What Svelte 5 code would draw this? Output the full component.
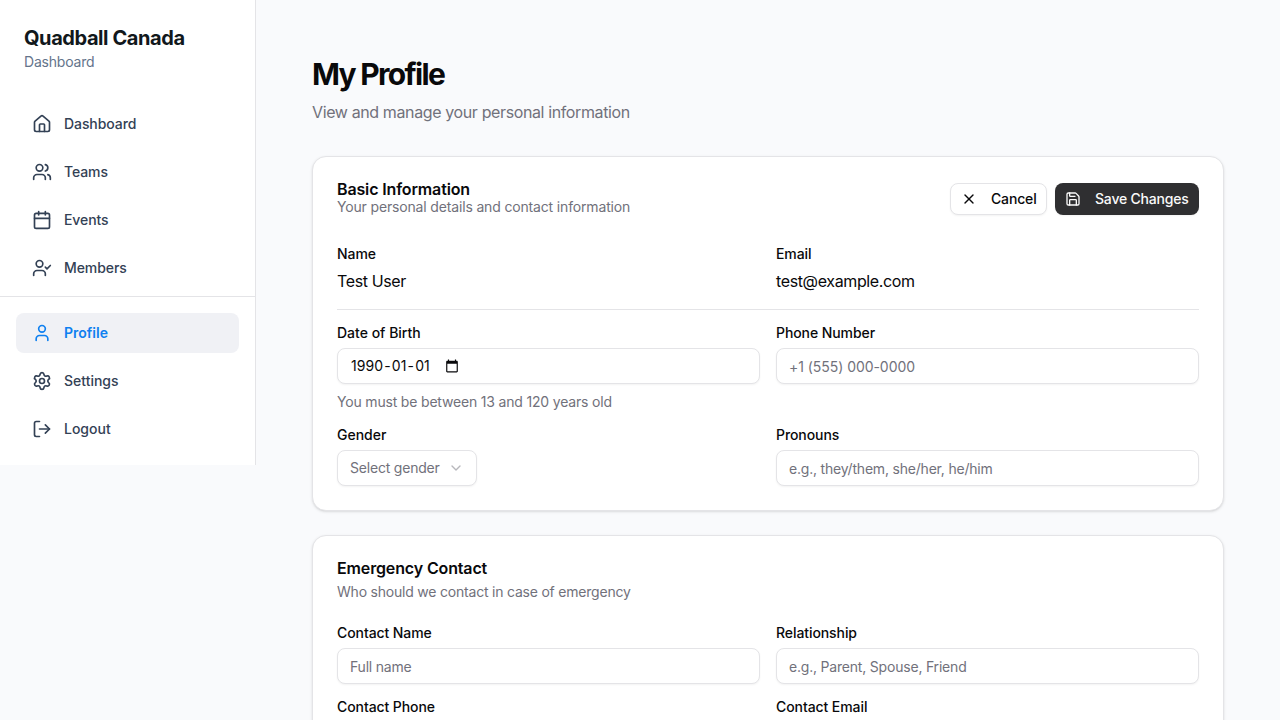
<script>
  const mainNav = [
    { label: 'Dashboard', icon: 'home' },
    { label: 'Teams', icon: 'users' },
    { label: 'Events', icon: 'calendar' },
    { label: 'Members', icon: 'userCheck' }
  ];
  const accountNav = [
    { label: 'Profile', icon: 'user', active: true },
    { label: 'Settings', icon: 'settings' },
    { label: 'Logout', icon: 'logout' }
  ];
  const icons = {
    home: [
      'M15 21v-8a1 1 0 0 0-1-1h-4a1 1 0 0 0-1 1v8',
      'M3 10a2 2 0 0 1 .709-1.528l7-5.999a2 2 0 0 1 2.582 0l7 5.999A2 2 0 0 1 21 10v9a2 2 0 0 1-2 2H5a2 2 0 0 1-2-2z'
    ],
    users: [
      'M16 21v-2a4 4 0 0 0-4-4H6a4 4 0 0 0-4 4v2',
      'M5 7a4 4 0 1 0 8 0a4 4 0 1 0-8 0',
      'M22 21v-2a4 4 0 0 0-3-3.87',
      'M16 3.13a4 4 0 0 1 0 7.75'
    ],
    calendar: [
      'M8 2v4',
      'M16 2v4',
      'M5 4h14a2 2 0 0 1 2 2v14a2 2 0 0 1-2 2H5a2 2 0 0 1-2-2V6a2 2 0 0 1 2-2z',
      'M3 10h18'
    ],
    userCheck: [
      'M16 21v-2a4 4 0 0 0-4-4H6a4 4 0 0 0-4 4v2',
      'M5 7a4 4 0 1 0 8 0a4 4 0 1 0-8 0',
      'm16 11 2 2 4-4'
    ],
    user: ['M19 21v-2a4 4 0 0 0-4-4H9a4 4 0 0 0-4 4v2', 'M8 7a4 4 0 1 0 8 0a4 4 0 1 0-8 0'],
    settings: [
      'M9.671 4.136a2.34 2.34 0 0 1 4.659 0 2.34 2.34 0 0 0 3.319 1.915 2.34 2.34 0 0 1 2.33 4.033 2.34 2.34 0 0 0 0 3.831 2.34 2.34 0 0 1-2.33 4.033 2.34 2.34 0 0 0-3.319 1.915 2.34 2.34 0 0 1-4.659 0 2.34 2.34 0 0 0-3.32-1.915 2.34 2.34 0 0 1-2.33-4.033 2.34 2.34 0 0 0 0-3.831A2.34 2.34 0 0 1 6.35 6.051a2.34 2.34 0 0 0 3.319-1.915',
      'M9 12a3 3 0 1 0 6 0a3 3 0 1 0-6 0'
    ],
    logout: ['m16 17 5-5-5-5', 'M21 12H9', 'M9 21H5a2 2 0 0 1-2-2V5a2 2 0 0 1 2-2h4'],
    close: ['M18 6 6 18', 'm6 6 12 12'],
    save: [
      'M15.2 3a2 2 0 0 1 1.4.6l3.8 3.8a2 2 0 0 1 .6 1.4V19a2 2 0 0 1-2 2H5a2 2 0 0 1-2-2V5a2 2 0 0 1 2-2z',
      'M17 21v-7a1 1 0 0 0-1-1H8a1 1 0 0 0-1 1v7',
      'M7 3v4a1 1 0 0 0 1 1h7'
    ],
    chevron: ['m6 9 6 6 6-6']
  };
</script>

{#snippet icon(name)}
  <svg class="icon {name}" viewBox="0 0 24 24" aria-hidden="true">
    {#each icons[name] as d}<path {d} />{/each}
  </svg>
{/snippet}

{#snippet navItem(item)}
  <a class="item" class:active={item.active} href="#{item.label.toLowerCase()}">
    {@render icon(item.icon)}<span>{item.label}</span>
  </a>
{/snippet}

{#snippet field(id, label, placeholder)}
  <div class="field">
    <label for={id}>{label}</label>
    <input {id} {placeholder} />
  </div>
{/snippet}

<div class="page">
  <aside>
    <div class="brand">
      <h2>Quadball Canada</h2>
      <p>Dashboard</p>
    </div>
    <nav>
      {#each mainNav as item}{@render navItem(item)}{/each}
    </nav>
    <nav class="account">
      {#each accountNav as item}{@render navItem(item)}{/each}
    </nav>
  </aside>

  <main>
    <header class="heading">
      <h1>My Profile</h1>
      <p>View and manage your personal information</p>
    </header>

    <section class="card">
      <div class="card-head split">
        <div>
          <h3>Basic Information</h3>
          <p class="desc">Your personal details and contact information</p>
        </div>
        <div class="actions">
          <button>{@render icon('close')}<span>Cancel</span></button>
          <button class="primary">{@render icon('save')}<span>Save Changes</span></button>
        </div>
      </div>

      <div class="grid identity">
        <div><h4>Name</h4><p>Test User</p></div>
        <div><h4>Email</h4><p>test@example.com</p></div>
      </div>
      <hr />
      <div class="grid">
        <div class="field">
          <span class="label">Date of Birth</span>
          <div class="control date">
            <span class="value"><span>1990</span>-<span>01</span>-<span>01</span></span>
            <svg class="picker" viewBox="0 0 24 24" aria-hidden="true">
              <path d="M20 3h-1V1h-2v2H7V1H5v2H4c-1.1 0-2 .9-2 2v16c0 1.1.9 2 2 2h16c1.1 0 2-.9 2-2V5c0-1.1-.9-2-2-2zm0 18H4V8h16v13z" />
            </svg>
          </div>
          <p class="hint">You must be between 13 and 120 years old</p>
        </div>
        {@render field('phone', 'Phone Number', '+1 (555) 000-0000')}
        <div class="field">
          <span class="label">Gender</span>
          <div class="control select"><span>Select gender</span>{@render icon('chevron')}</div>
        </div>
        {@render field('pronouns', 'Pronouns', 'e.g., they/them, she/her, he/him')}
      </div>
    </section>

    <section class="card">
      <div class="card-head stacked">
        <h3>Emergency Contact</h3>
        <p class="desc">Who should we contact in case of emergency</p>
      </div>
      <div class="grid">
        {@render field('contact-name', 'Contact Name', 'Full name')}
        {@render field('relationship', 'Relationship', 'e.g., Parent, Spouse, Friend')}
        {@render field('contact-phone', 'Contact Phone', '')}
        {@render field('contact-email', 'Contact Email', '')}
      </div>
    </section>
  </main>
</div>

<style>
  :global(body) { background: #f9fafc; }
  * { box-sizing: border-box; }
  h1, h2, h3, h4, p { margin: 0; }
  .page {
    display: flex;
    align-items: flex-start;
    height: 720px;
    overflow: hidden;
    font: 16px/24px Inter, sans-serif;
    color: #09090b;
    -webkit-font-smoothing: antialiased;
  }
  .icon {
    width: 16px;
    height: 16px;
    flex: none;
    fill: none;
    stroke: currentColor;
    stroke-width: 2;
    stroke-linecap: round;
    stroke-linejoin: round;
  }
  aside {
    width: 256px;
    flex: none;
    background: #fff;
    border-right: 1px solid #e4e4e7;
  }
  .brand { padding: 24px; }
  .brand h2 { font-size: 20px; line-height: 28px; font-weight: 700; letter-spacing: -0.42px; color: #11181c; }
  .brand p { font-size: 14px; line-height: 20px; letter-spacing: -0.2px; color: #64748b; }
  nav { display: flex; flex-direction: column; gap: 8px; padding: 8px 16px; }
  .account { border-top: 1px solid #e4e4e7; padding: 16px; }
  .item {
    display: flex;
    align-items: center;
    gap: 12px;
    height: 40px;
    padding: 0 16px;
    border-radius: 8px;
    font-size: 14px;
    line-height: 20px;
    font-weight: 500;
    letter-spacing: -0.08px;
    color: #334155;
    text-decoration: none;
  }
  .account .item { letter-spacing: 0; }
  .item .icon { width: 20px; height: 20px; }
  .active { background: #f0f1f5; color: #0f80f0; font-weight: 600; }
  main { flex: 1; min-width: 0; padding: 56px; display: flex; flex-direction: column; gap: 24px; }
  .heading { margin-bottom: 8px; }
  h1 { font-size: 30px; line-height: 36px; font-weight: 700; letter-spacing: -1.7px; margin-bottom: 8px; }
  .heading p { color: #71717b; letter-spacing: -0.38px; }
  .card {
    flex: none;
    padding: 24px;
    background: #fff;
    border: 1px solid #e4e4e7;
    border-radius: 14px;
    box-shadow: 0 1px 3px rgba(0, 0, 0, 0.1), 0 1px 2px -1px rgba(0, 0, 0, 0.1);
  }
  .card-head { margin-bottom: 24px; }
  .card-head h3 { font-size: 16px; line-height: 16px; font-weight: 600; letter-spacing: -0.14px; }
  .desc { font-size: 14px; line-height: 20px; letter-spacing: -0.16px; color: #71717b; }
  .stacked .desc { letter-spacing: -0.21px; }
  .split { display: flex; justify-content: space-between; align-items: center; }
  .stacked { display: grid; gap: 6px; }
  .actions { display: flex; gap: 8px; }
  button {
    display: flex;
    align-items: center;
    gap: 14px;
    width: 97px;
    height: 32px;
    padding: 0 10px;
    border: 1px solid #e4e4e7;
    border-radius: 8px;
    background: #fff;
    color: #09090b;
    font: 500 14px/20px Inter, sans-serif;
    letter-spacing: -0.16px;
    white-space: nowrap;
    box-shadow: 0 1px 2px rgba(0, 0, 0, 0.05);
  }
  .primary { width: 144px; background: #2f2f31; border: 0; color: #fafafa; font-weight: 550; letter-spacing: -0.2px; }
  .identity p { letter-spacing: -0.37px; }
  .grid { display: grid; grid-template-columns: 1fr 1fr; gap: 16px; }
  h4 { font-size: 14px; line-height: 24px; font-weight: 500; padding-top: 1px; margin-bottom: 3px; letter-spacing: -0.08px; }
  hr { height: 1px; margin: 16px 0; border: 0; background: #e4e4e7; }
  .field { display: flex; flex-direction: column; align-items: stretch; gap: 8px; }
  label, .label { font-size: 14px; line-height: 14px; font-weight: 500; letter-spacing: -0.08px; }
  .label { letter-spacing: 0; }
  input, .control {
    width: 100%;
    height: 36px;
    padding: 0 12px;
    border: 1px solid #e4e4e7;
    border-radius: 8px;
    background: #fff;
    box-shadow: 0 1px 2px rgba(0, 0, 0, 0.05);
    font: 14px/20px Inter, sans-serif;
    letter-spacing: -0.2px;
    outline: none;
  }
  input::placeholder { color: #71717b; opacity: 1; }
  input[id='phone'] { letter-spacing: -0.05px; }
  .control { display: flex; align-items: center; }
  .date { letter-spacing: 0.1px; }
  .value span { padding: 0 1px; }
  .picker { width: 14px; height: 14px; margin-left: 14px; fill: #09090b; }
  .select { width: 140px; justify-content: space-between; color: #71717b; white-space: nowrap; }
  .select .icon { opacity: 0.5; }
  .hint { font-size: 14px; line-height: 20px; letter-spacing: -0.18px; color: #71717b; }
</style>
